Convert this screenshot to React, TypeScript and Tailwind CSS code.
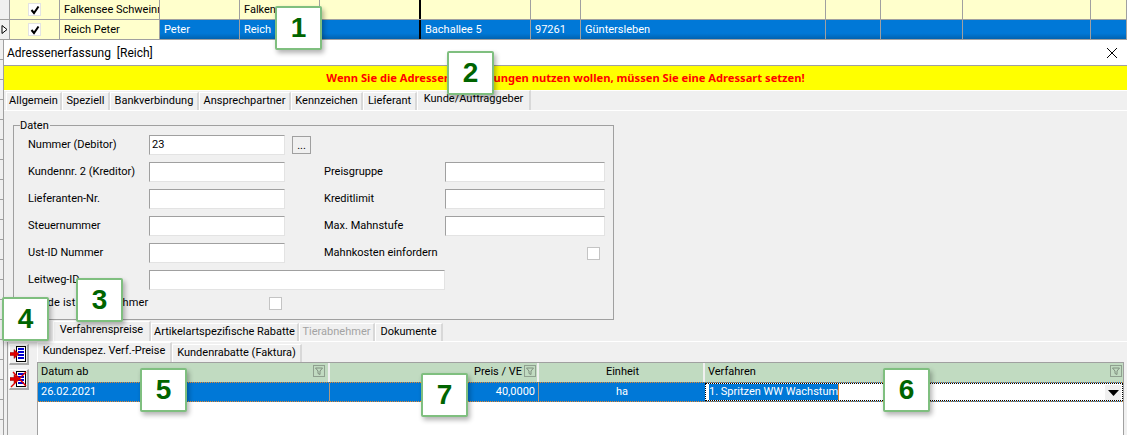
import React from "react";

const topCols = [10, 50, 100, 80, 80, 101, 110, 50, 245, 55, 82, 128, 36];
const ticks = Array.from({ length: 20 }, (_, i) => i);

function Cell({ w, children, cls = "" }: { w: number; children?: React.ReactNode; cls?: string }) {
  return (
    <div style={{ width: w }} className={`shrink-0 h-full flex items-center px-[4px] overflow-hidden whitespace-nowrap border-r border-[#a0a0a0] ${cls}`}>
      {children}
    </div>
  );
}

function Check() {
  return (
    <div className="w-[13px] h-[13px] mx-auto bg-white border border-[#e3e3e3] flex items-center justify-center">
      <svg width="10" height="10" viewBox="0 0 10 10"><path d="M1.5 5 L4 8 L8.5 1.5" fill="none" stroke="#000" strokeWidth="2" /></svg>
    </div>
  );
}

function TopRow({ sel, vals }: { sel?: boolean; vals: string[] }) {
  const bg = sel ? "bg-gradient-to-b from-[#0078d7] from-70% to-[#0063b1] text-white" : "bg-[#ffffcc] text-black";
  return (
    <div className="flex h-[20px] border-b border-[#a0a0a0]">
      <Cell w={topCols[0]} cls="bg-[#f0f0f0] !px-0 justify-center">
        {sel && <svg width="7" height="9" viewBox="0 0 7 9"><path d="M1 .5 L6 4.5 L1 8.5 Z" fill="#fff" stroke="#000" /></svg>}
      </Cell>
      {vals.map((v, i) => {
        const w = topCols[i + 1];
        const extra = i === 0 ? "!px-0" : "pt-[2px]";
        const c = i === 0 || i === 1 ? "bg-[#ffffcc] !text-black bg-none" : "";
        const black = i === 4 ? "border-r-2 border-r-black" : "";
        return (
          <Cell key={i} w={w} cls={`${bg} ${extra} ${c} ${black}`}>
            {i === 0 ? <Check /> : v}
          </Cell>
        );
      })}
    </div>
  );
}

function Tab({ w, label, active, disabled }: { w: number; label: string; active?: boolean; disabled?: boolean }) {
  return (
    <div
      style={{ width: w }}
      className={`shrink-0 flex items-center justify-center whitespace-nowrap border-t border-l border-white border-r-2 border-r-[#d8d8d8] ${active ? "h-[20px] pb-[2px] bg-[#f0f0f0]" : "h-[18px] bg-[#f0f0f0]"} ${disabled ? "text-[#a3a3a3]" : "text-black"}`}
    >
      {label}
    </div>
  );
}

function Input({ w, children, h = 20 }: { w: number; children?: React.ReactNode; h?: number }) {
  return (
    <div style={{ width: w, height: h }} className="shrink-0 bg-white border-t border-l border-[#a0a0a0] border-r border-b border-r-[#e3e3e3] border-b-[#e3e3e3] pl-[2px] flex items-center">
      {children}
    </div>
  );
}

function Box() {
  return <div className="w-[13px] h-[13px] bg-white border border-[#c4c4c4] shrink-0" />;
}

function Row({ label, right, children }: { label: string; right?: string; children?: React.ReactNode }) {
  return (
    <div className="flex items-center h-[20px]">
      <div className="w-[121px] shrink-0 whitespace-nowrap">{label}</div>
      <Input w={136} />
      {right && <div className="ml-[39px] w-[121px] shrink-0 whitespace-nowrap">{right}</div>}
      {children}
    </div>
  );
}

function Badge({ n, cls }: { n: number; cls: string }) {
  return (
    <div className={`absolute z-10 w-[47px] h-[44px] bg-white border-2 border-[#7fbf7f] rounded-[2px] shadow-[2px_3px_5px_rgba(0,0,0,0.3)] flex items-center justify-center text-[28px] font-bold text-[#006400] ${cls}`} style={{ fontFamily: '"Liberation Sans", sans-serif' }}>
      {n}
    </div>
  );
}

function Funnel({ cls = "right-[2px]" }: { cls?: string }) {
  return (
    <div className={`absolute top-[2px] w-[12px] h-[12px] border border-[#8fa08f] flex items-center justify-center ${cls}`}>
      <svg width="8" height="8" viewBox="0 0 8 8"><path d="M.5 1 H7.5 L5 4 V7.5 L3 6.5 V4 Z" fill="none" stroke="#7f8f7f" /></svg>
    </div>
  );
}

function DocIcon({ cross }: { cross?: boolean }) {
  return (
    <div className="w-[20px] h-[21px] border-r-2 border-b-2 border-[#a8a8a8] border-t border-l border-t-white border-l-white flex items-center justify-center">
      <svg width="17" height="18" viewBox="0 0 17 18">
        <rect x="6.5" y="1.5" width="9" height="15" fill="#fff" stroke="#000" />
        <path d="M8 4 H14 M8 7 H14 M8 10 H14 M8 13 H14" stroke="#0000d0" strokeWidth="2" />
        <path d="M0 7.5 H4 V4.5 L9 9 L4 13.5 V10.5 H0 Z" fill="#e00000" stroke="#900000" strokeWidth=".5" />
        {cross && <path d="M1 17 L16 2 M3 2 L16 16" stroke="#e00000" strokeWidth="1.4" />}
      </svg>
    </div>
  );
}

function HeadCell({ w, children, cls = "", filter }: { w: number; children?: React.ReactNode; cls?: string; filter?: string }) {
  return (
    <div style={{ width: w }} className={`relative shrink-0 h-full flex items-center pl-[3px] border-r-2 border-r-[#f0f0f0] whitespace-nowrap ${cls}`}>
      {children}
      {filter && <Funnel cls={filter} />}
    </div>
  );
}

export default function App() {
  return (
    <div className="relative w-[1127px] h-[435px] overflow-hidden bg-[#f0f0f0] text-[11px] text-black" style={{ fontFamily: 'Roboto, sans-serif' }}>
      <Badge n={1} cls="left-[275px] top-[6px]" />
      <Badge n={2} cls="left-[447px] top-[51px]" />
      <Badge n={3} cls="left-[76px] top-[278px]" />
      <Badge n={4} cls="left-[2px] top-[297px]" />
      <Badge n={5} cls="left-[140px] top-[368px]" />
      <Badge n={7} cls="left-[421px] top-[373px]" />
      <Badge n={6} cls="left-[883px] top-[368px]" />

      <TopRow vals={["", "Falkensee Schweinr", "", "Falkensee", "", "", "", "", "", "", "", ""]} />
      <TopRow sel vals={["", "Reich Peter", "Peter", "Reich", "", "Bachallee 5", "97261", "Güntersleben", "", "", "", ""]} />

      <div className="flex h-[395px]">
        <div className="w-[3px] shrink-0 bg-[#f0f0f0] overflow-hidden">
          {ticks.map((t) => (
            <div key={t} className="h-[20px] border-b border-[#a0a0a0]" />
          ))}
        </div>
        <div className="flex-1 min-w-0 flex flex-col border-l border-[#a0a0a0]">
          <div className="h-[26px] bg-white border-b border-[#a0a0a0] flex items-center justify-between pl-[3px] pr-[9px] shrink-0">
            <span className="text-[12px] whitespace-pre">Adressenerfassung  [Reich]</span>
            <svg width="12" height="12" viewBox="0 0 12 12"><path d="M1 1 L11 11 M11 1 L1 11" stroke="#000" strokeWidth="1" /></svg>
          </div>
          <div className="h-[25px] bg-[#ffff00] text-[#ff0000] font-bold text-[11.15px] flex items-center justify-center shrink-0 border-b border-white" style={{ fontFamily: '"Noto Sans", sans-serif' }}>
            Wenn Sie die Adressenverwaltungen nutzen wollen, müssen Sie eine Adressart setzen!
          </div>

          <div className="flex items-end h-[20px] pl-[2px] border-b border-white shrink-0">
            <Tab w={56} label="Allgemein" />
            <Tab w={48} label="Speziell" />
            <Tab w={89} label="Bankverbindung" />
            <Tab w={92} label="Ansprechpartner" />
            <Tab w={72} label="Kennzeichen" />
            <Tab w={54} label="Lieferant" />
            <Tab w={114} label="Kunde/Auftraggeber" active />
          </div>

          <div className="relative ml-[9px] mt-[14px] w-[601px] h-[195px] border border-[#a0a0a0] shrink-0 pl-[14px] pt-[9px] flex flex-col gap-[7px]">
            <div className="absolute left-[6px] -top-[7px] bg-[#f0f0f0] pr-[1px] leading-[13px]">Daten</div>
            <div className="flex items-center h-[20px]">
              <div className="w-[121px] shrink-0">Nummer (Debitor)</div>
              <Input w={136}>23</Input>
              <div className="ml-[7px] w-[19px] h-[18px] bg-[#f0f0f0] border border-[#a0a0a0] flex items-center justify-center leading-none">...</div>
            </div>
            <Row label="Kundennr. 2 (Kreditor)" right="Preisgruppe"><Input w={160} /></Row>
            <Row label="Lieferanten-Nr." right="Kreditlimit"><Input w={160} /></Row>
            <Row label="Steuernummer" right="Max. Mahnstufe"><Input w={160} /></Row>
            <Row label="Ust-ID Nummer" right="Mahnkosten einfordern">
              <div className="ml-[142px]"><Box /></div>
            </Row>
            <div className="flex items-center h-[20px]">
              <div className="w-[121px] shrink-0">Leitweg-ID</div>
              <Input w={296} />
            </div>
            <div className="flex items-center h-[14px] -mt-[1px]">
              <div className="w-[241px] shrink-0 tracking-[0.2px]">Kunde ist Tierabnehmer</div>
              <Box />
            </div>
          </div>

          <div className="flex items-end h-[19px] mt-[3px] pl-[49px] border-b border-white shrink-0">
            <Tab w={98} label="Verfahrenspreise" active />
            <Tab w={148} label="Artikelartspezifische Rabatte" />
            <Tab w={76} label="Tierabnehmer" disabled />
            <Tab w={68} label="Dokumente" />
          </div>

          <div className="flex flex-1 min-h-0">
            <div className="w-[30px] shrink-0 ml-[3px] pl-[1px] pt-[2px] flex flex-col gap-[4px] border-l border-[#a0a0a0]">
              <DocIcon />
              <DocIcon cross />
            </div>
            <div className="flex-1 min-w-0 flex flex-col">
              <div className="flex items-end h-[20px] shrink-0">
                <Tab w={135} label="Kundenspez. Verf.-Preise" active />
                <Tab w={130} label="Kundenrabatte (Faktura)" />
              </div>
              <div className="flex-1 bg-white border-t border-l border-r border-[#a0a0a0] mr-[3px] min-h-0">
                <div className="flex h-[19px] bg-[#c1dbc1]">
                  <HeadCell w={292} filter="right-[3px]">Datum ab</HeadCell>
                  <HeadCell w={209} cls="justify-end pr-[15px]" filter="right-[1px]">Preis / VE</HeadCell>
                  <HeadCell w={166} cls="justify-center">Einheit</HeadCell>
                  <HeadCell w={419} cls="!border-r-0" filter="right-[2px]">Verfahren</HeadCell>
                </div>
                <div className="flex h-[20px] text-white bg-[#0078d7] border-y border-dotted border-[#e8872a]">
                  <div className="w-[292px] shrink-0 pl-[3px] flex items-center border-r border-[#b09a80]">26.02.2021</div>
                  <div className="w-[209px] shrink-0 pr-[3px] flex items-center justify-end border-r border-[#b09a80]">40,0000</div>
                  <div className="w-[166px] shrink-0 flex items-center justify-center">ha</div>
                  <div className="flex-1 bg-white border border-dotted border-black text-black flex items-center pl-[3px] relative">
                    <span className="bg-[#0078d7] text-white whitespace-nowrap border-r border-[#e8872a]">1. Spritzen WW Wachstum</span>
                    <div className="absolute right-[1px] top-[1px] w-[16px] h-[15px] bg-[#f0f0f0] flex items-center justify-center">
                      <svg width="11" height="6" viewBox="0 0 11 6"><path d="M0 0 H11 L5.5 6 Z" fill="#000" /></svg>
                    </div>
                  </div>
                </div>
              </div>
            </div>
          </div>
        </div>
      </div>
    </div>
  );
}
